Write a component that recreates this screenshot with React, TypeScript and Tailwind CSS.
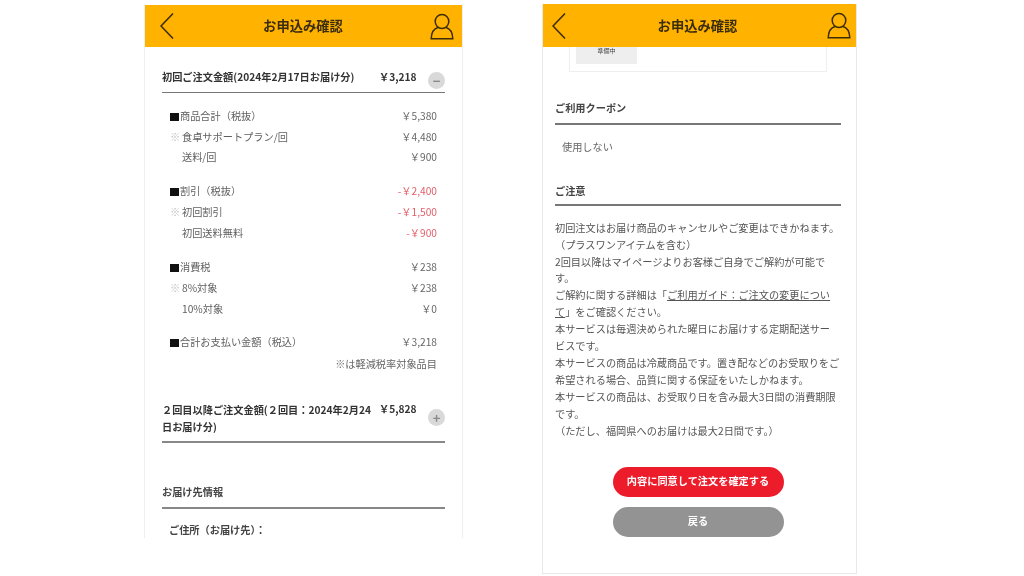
const font = { fontFamily: '"Noto Sans CJK JP", "Noto Sans", sans-serif' };

const Header = ({ className }: { className: string }) => (
  <div className={`flex shrink-0 items-center justify-between bg-[#ffb300] ${className}`}>
    <svg width="16" height="28" viewBox="0 0 16 28" fill="none" stroke="#3d2c08" strokeWidth="1.6">
      <path d="M13 1.500 1 14l12 12.500" />
    </svg>
    <span className="text-[13.3px] leading-none font-bold text-[#3a2c0c]">お申込み確認</span>
    <svg width="24" height="27" viewBox="0 0 24 27" fill="none" stroke="#3d2c08" strokeWidth="1.5">
      <ellipse cx="12" cy="8.500" rx="6.800" ry="7" />
      <path d="M8 14.500C4 15.500 1.500 19 1.200 25.800h21.600C22.500 19 20 15.500 16 14.500" />
    </svg>
  </div>
);

const Row = ({ label, value, mark, red, head, className }: { label: string; value: string; mark?: boolean; red?: boolean; head?: boolean; className?: string }) => (
  <div className={`flex h-[21px] items-center justify-between ${className ?? ''}`}>
    <div className="flex items-center text-[#5f5f5f]">
      {head && <span className="mr-px h-[8px] w-[9px] bg-[#111]" />}
      {mark && <span className="w-[12px] text-[#bbbbbb]">※</span>}
      {!head && !mark && <span className="w-[12px]" />}
      <span>{label}</span>
    </div>
    <span className={red ? 'text-[#e2606a]' : 'text-[#666]'}>{value}</span>
  </div>
);

const Circle = ({ sign, className }: { sign: string; className?: string }) => (
  <span className={`flex h-[17px] w-[17px] shrink-0 items-center justify-center rounded-full bg-[#d9d9d9] ${className ?? ''}`}>
    <span className="text-[13px] leading-none font-bold text-[#8a8a8a]">{sign}</span>
  </span>
);

export default function App() {
  return (
    <div className="flex h-[576px] w-[1024px] items-start gap-[79px] overflow-hidden bg-white pt-[4px] pl-[144px] text-[10.2px] leading-[16.900px] blur-[0.5px]" style={font}>
      <div className="flex h-[534px] w-[319px] flex-col overflow-hidden border-x border-[#eeeeee]">
        <Header className="mt-px h-[42px] pr-[8px] pl-[15px]" />
        <div className="px-[17px]">
          <div className="flex h-[46px] items-end border-b border-[#777] pb-[3px] font-bold text-[#333]">
            <span className="mb-[3px] w-[217px] whitespace-nowrap">初回ご注文金額(2024年2月17日お届け分)</span>
            <span className="mb-[3px] w-[49px]">￥3,218</span>
            <Circle sign="−" />
          </div>
          <div className="px-[8px] pt-[13px]">
            <Row head label="商品合計（税抜）" value="￥5,380" />
            <Row mark label="食卓サポートプラン/回" value="￥4,480" />
            <Row label="送料/回" value="￥900" className="-mt-px" />
            <div className="h-[13px]" />
            <Row head label="割引（税抜）" value="-￥2,400" red />
            <Row mark label="初回割引" value="-￥1,500" red />
            <Row label="初回送料無料" value="-￥900" red />
            <div className="h-[13px]" />
            <Row head label="消費税" value="￥238" />
            <Row mark label="8%対象" value="￥238" />
            <Row label="10%対象" value="￥0" />
            <div className="h-[12px]" />
            <Row head label="合計お支払い金額（税込）" value="￥3,218" />
            <div className="h-[21px] text-right leading-[21px] text-[#666]">※は軽減税率対象品目</div>
          </div>
          <div className="mt-[26px] flex h-[43px] items-center border-b-2 border-[#888] pb-[4px] font-bold text-[#333]">
            <span className="w-[217px] whitespace-nowrap">２回目以降ご注文金額(２回目：2024年2月24<br />日お届け分)</span>
            <span className="mt-[1px] w-[49px] self-start">￥5,828</span>
            <Circle sign="+" className="mb-[2px]" />
          </div>
          <div className="mt-[41px] border-b-2 border-[#888] pb-[6px] font-bold text-[#444]">お届け先情報</div>
          <div className="mt-[13px] pl-[7px] font-bold text-[#444]">ご住所（お届け先）：</div>
        </div>
      </div>

      <div className="flex h-[570px] w-[315px] flex-col overflow-hidden border-x border-b border-[#e8e8e8]">
        <Header className="h-[43px] pr-[5px] pl-[9px]" />
        <div className="pr-[15px] pl-[12px]">
          <div className="mx-[14px] flex h-[25px] items-start border-x border-b border-[#eeeeee] pl-[6px]">
            <div className="flex h-[17px] w-[61px] items-start justify-center bg-[#eeeeee] text-[6px] leading-[7px] text-[#444]">準備中</div>
          </div>
          <div className="mt-[28px] border-b-2 border-[#777] pb-[6px] font-bold text-[#444]">ご利用クーポン</div>
          <div className="mt-[14px] pl-[7px] text-[#666]">使用しない</div>
          <div className="mt-[27px] border-b-2 border-[#777] pb-[4px] font-bold text-[#444]">ご注意</div>
          <div className="mt-[14px] whitespace-nowrap text-[#555]">
            <p>初回注文はお届け商品のキャンセルやご変更はできかねます。</p>
            <p>（プラスワンアイテムを含む）</p>
            <p>2回目以降はマイページよりお客様ご自身でご解約が可能で<br />す。</p>
            <p>ご解約に関する詳細は「<span className="underline">ご利用ガイド：ご注文の変更につい<br />て</span>」をご確認ください。</p>
            <p>本サービスは毎週決められた曜日にお届けする定期配送サー<br />ビスです。</p>
            <p>本サービスの商品は冷蔵商品です。置き配などのお受取りをご<br />希望される場合、品質に関する保証をいたしかねます。</p>
            <p>本サービスの商品は、お受取り日を含み最大3日間の消費期限<br />です。</p>
            <p>（ただし、福岡県へのお届けは最大2日間です。）</p>
          </div>
          <div className="mt-[27px] flex flex-col items-center gap-[10px] font-bold text-white">
            <div className="flex h-[30px] w-[171px] items-center justify-center rounded-full bg-[#ec1c2b]">内容に同意して注文を確定する</div>
            <div className="flex h-[30px] w-[171px] items-center justify-center rounded-full bg-[#939393]">戻る</div>
          </div>
        </div>
      </div>
    </div>
  );
}
